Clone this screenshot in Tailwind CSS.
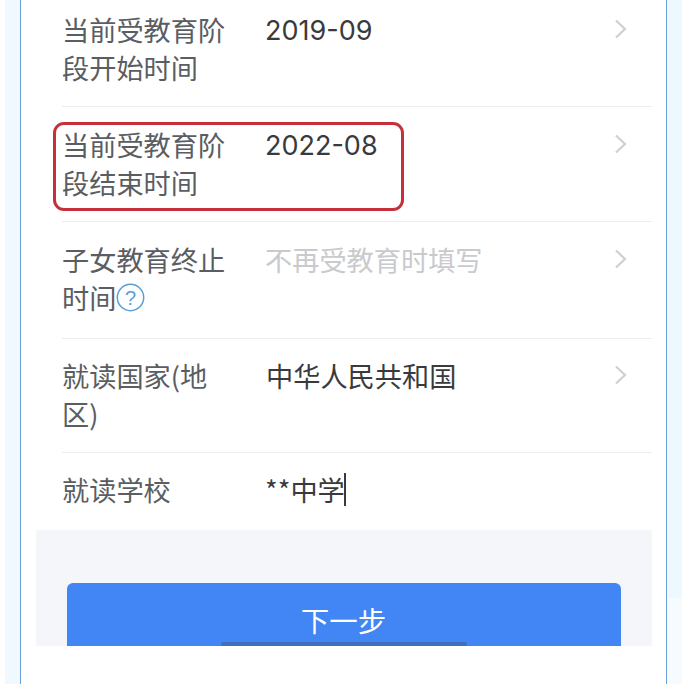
<!DOCTYPE html>
<html lang="zh-CN">
<head>
<meta charset="utf-8">
<script src="https://cdn.jsdelivr.net/npm/@tailwindcss/browser@4"></script>
</head>
<body class="bg-white">
<div class="w-[686px] h-[684px] overflow-hidden flex font-['Noto_Sans_CJK_SC','Noto_Sans',sans-serif] bg-white">
  <div class="w-[5px] shrink-0 bg-white"></div>
  <div class="w-[15px] shrink-0 bg-[#f0f9ff]"></div>
  <div class="w-[647px] shrink-0 h-full border-x border-[#6a9fd8] bg-white flex flex-col pl-[15px] pr-[14px]">
    <div class="h-[646px] overflow-hidden shrink-0 flex flex-col">
      <div class="ml-[26px] -mt-[8px] h-[115px] shrink-0 border-b border-[#ebedf0] pt-[18px] flex text-[27.2px] leading-[38px]">
        <div class="w-[202px] shrink-0 text-[#5a5d62]">当前受教育阶<br>段开始时间</div>
        <div class="flex-1 text-[#3a3a3c] text-[27px] font-['Inter',sans-serif] pl-[1px] pt-[2px]">2019-09</div>
        <svg class="w-[13px] h-[20px] mt-[9px] mr-[25px]" viewBox="0 0 13 20" fill="none" stroke="#d0d0d0" stroke-width="2.2"><path d="M2 1.5l9 8.5-9 8.5"/></svg>
      </div>
      <div class="relative ml-[26px] h-[115px] shrink-0 border-b border-[#ebedf0] pt-[18px] flex text-[27.2px] leading-[38px]">
        <div class="w-[202px] shrink-0 text-[#5a5d62]">当前受教育阶<br>段结束时间</div>
        <div class="flex-1 text-[#3a3a3c] text-[27px] font-['Inter',sans-serif] pl-[1px] pt-[2px]">2022-08</div>
        <svg class="w-[13px] h-[20px] mt-[9px] mr-[25px]" viewBox="0 0 13 20" fill="none" stroke="#d0d0d0" stroke-width="2.2"><path d="M2 1.5l9 8.5-9 8.5"/></svg>
        <div class="absolute left-[-9px] top-[15px] w-[351px] h-[89px] border-[3px] border-[#c5303a] rounded-[11px]"></div>
      </div>
      <div class="ml-[26px] h-[117px] shrink-0 border-b border-[#ebedf0] pt-[18px] flex text-[27.2px] leading-[38px]">
        <div class="w-[202px] shrink-0 text-[#5a5d62]">子女教育终止<div class="flex items-center">时间<svg class="w-[29px] h-[29px]" viewBox="0 0 29 29" fill="none"><circle cx="14.5" cy="14.5" r="13.2" stroke="#5a9fd6" stroke-width="1.5"/><text x="14.5" y="21.5" text-anchor="middle" font-size="20" fill="#5a9fd6" font-family="Liberation Sans">?</text></svg></div></div>
        <div class="flex-1 text-[#c8cacd] pl-[1px]">不再受教育时填写</div>
        <svg class="w-[13px] h-[20px] mt-[9px] mr-[25px]" viewBox="0 0 13 20" fill="none" stroke="#d0d0d0" stroke-width="2.2"><path d="M2 1.5l9 8.5-9 8.5"/></svg>
      </div>
      <div class="ml-[26px] h-[114px] shrink-0 border-b border-[#ebedf0] pt-[17px] flex text-[27.2px] leading-[38px]">
        <div class="w-[202px] shrink-0 text-[#5a5d62]">就读国家(地<br>区)</div>
        <div class="flex-1 text-[#3a3a3c] pl-[2px]">中华人民共和国</div>
        <svg class="w-[13px] h-[20px] mt-[9px] mr-[25px]" viewBox="0 0 13 20" fill="none" stroke="#d0d0d0" stroke-width="2.2"><path d="M2 1.5l9 8.5-9 8.5"/></svg>
      </div>
      <div class="ml-[26px] h-[77px] shrink-0 pt-[17px] flex text-[27.2px] leading-[38px]">
        <div class="w-[202px] shrink-0 text-[#5a5d62]">就读学校</div>
        <div class="flex-1 text-[#3a3a3c] flex items-start pl-[1px]">**中学<span class="w-[2px] h-[33px] bg-[#3a3a3c] ml-[-1px] mt-[3px]"></span></div>
      </div>
      <div class="relative flex-1 bg-[#f4f6f9] pt-[53px] px-[31px]">
        <div class="h-[64px] w-[554px] bg-[#4285f4] rounded-t-[6px] text-white text-[28.5px] leading-[38px] text-center pt-[18px] pr-[1px]">下一步</div>
        <div class="absolute left-[185px] bottom-0 w-[246px] h-[5px] rounded-t-[2px] bg-[#3f6fbf]"></div>
      </div>
    </div>
  </div>
  <div class="w-[15px] shrink-0 flex flex-col">
    <div class="h-[598px] bg-[#eef8ff]"></div>
    <div class="flex-1 bg-[#f5fbff]"></div>
  </div>
</div>
</body>
</html>
